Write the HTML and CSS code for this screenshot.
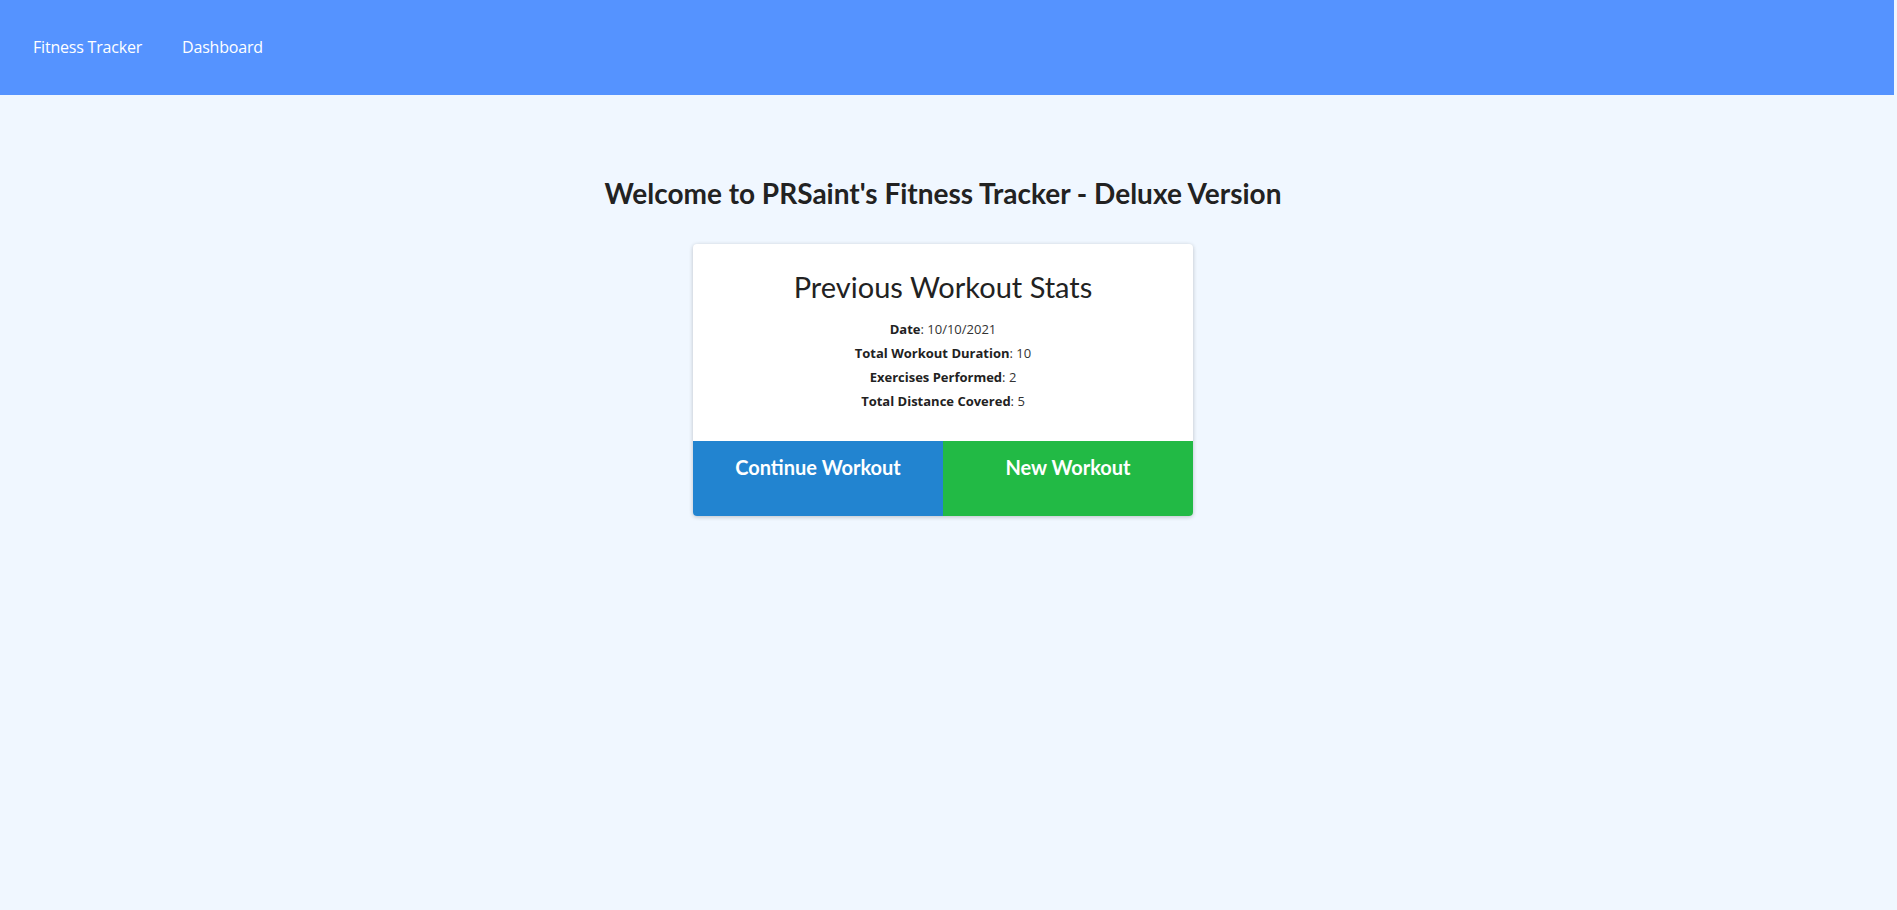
FILE: index.html
```html
<!DOCTYPE html>
<html lang="en">
<head>
<meta charset="utf-8">
<title>Fitness Tracker</title>
<link rel="stylesheet" href="styles.css">
</head>
<body>
<nav class="nav">
  <a class="nav-link" href="#">Fitness Tracker</a>
  <a class="nav-link" href="#">Dashboard</a>
</nav>
<main class="main">
  <h1 class="welcome">Welcome to PRSaint's Fitness Tracker - Deluxe Version</h1>
  <section class="card">
    <div class="card-body">
      <h2 class="card-title">Previous Workout Stats</h2>
      <p class="stat"><strong>Date</strong>: 10/10/2021</p>
      <p class="stat"><strong>Total Workout Duration</strong>: 10</p>
      <p class="stat"><strong>Exercises Performed</strong>: 2</p>
      <p class="stat"><strong>Total Distance Covered</strong>: 5</p>
    </div>
    <div class="actions">
      <a class="btn btn-continue" href="#">Continue Workout</a>
      <a class="btn btn-new" href="#">New Workout</a>
    </div>
  </section>
</main>
</body>
</html>
```
FILE: styles.css
```css
html, body {
  margin: 0;
  padding: 0;
}
body {
  background: #f0f7ff;
  font-family: "Open Sans", "Noto Sans", sans-serif;
  color: #212529;
  min-height: 910px;
  border-right: 3px solid #f0f7ff;
  box-sizing: border-box;
}
.nav {
  background: #5593ff;
  height: 95px;
  box-sizing: border-box;
  display: flex;
  align-items: center;
  padding-left: 33px;
  padding-bottom: 2px;
  gap: 40px;
}
.nav-link {
  color: #ffffff;
  text-decoration: none;
  font-size: 16px;
  letter-spacing: -0.2px;
}
.main {
  display: flex;
  flex-direction: column;
  align-items: center;
  padding-right: 8px;
}
.welcome {
  font-family: Lato, sans-serif;
  font-weight: 700;
  font-size: 28px;
  margin: 80px 0 0;
  line-height: 36px;
  color: #222;
}
.card {
  margin-top: 33px;
  width: 500px;
  background: #fff;
  border-radius: 4px;
  box-shadow: 0 1px 4px rgba(0,0,0,0.22);
  overflow: hidden;
  display: flex;
  flex-direction: column;
}
.card-body {
  padding: 25px 0 17px;
  text-align: center;
  height: 197px;
  box-sizing: border-box;
}
.card-title {
  font-family: Lato, sans-serif;
  font-weight: 400;
  font-size: 29px;
  line-height: 36px;
  margin: 0 0 12px;
  color: #222;
}
.stat {
  margin: 0;
  font-size: 13px;
  line-height: 24px;
  color: #333;
}
.stat strong {
  font-weight: 700;
  color: #222;
}
.actions {
  display: flex;
  height: 75px;
}
.btn {
  flex: 1;
  color: #fff;
  text-decoration: none;
  font-family: Lato, sans-serif;
  font-weight: 700;
  font-size: 20px;
  text-align: center;
  padding-top: 14px;
  line-height: 24px;
}
.btn-continue {
  background: #2284d0;
}
.btn-new {
  background: #22ba45;
}
```
